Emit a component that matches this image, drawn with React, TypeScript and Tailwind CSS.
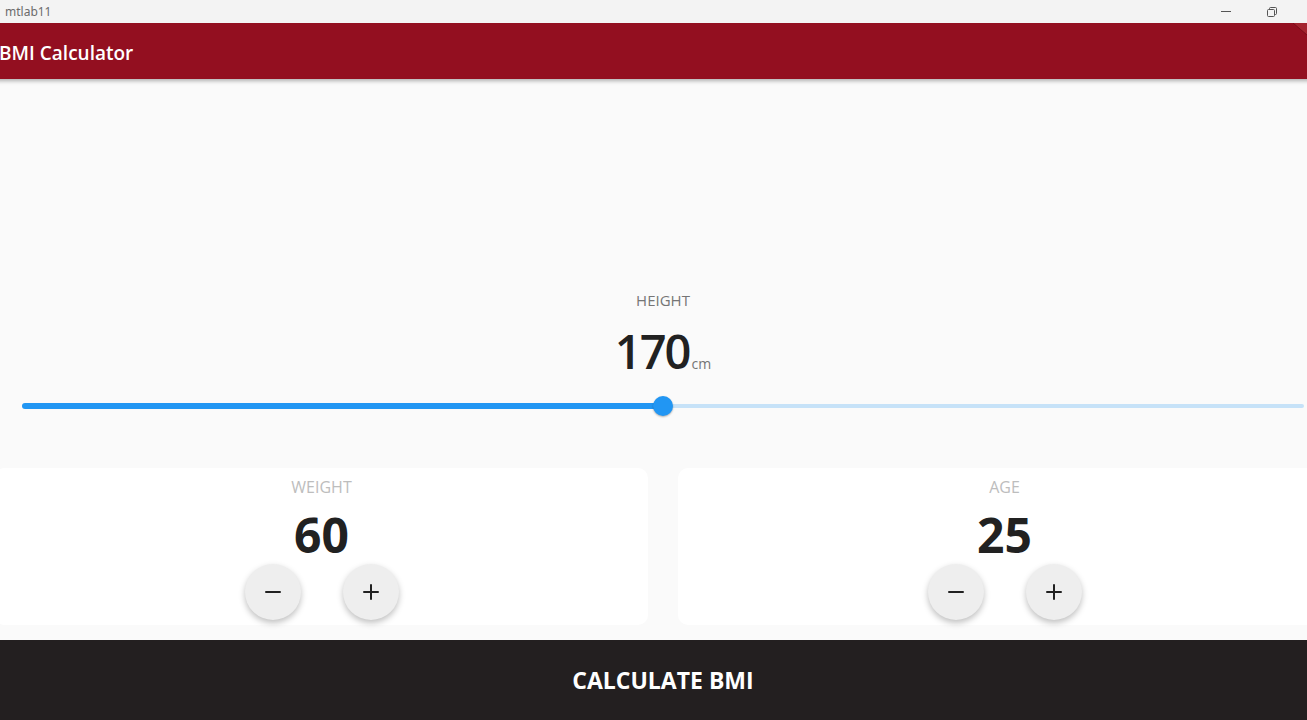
import { Minus, Plus } from "lucide-react"

type CounterProps = {
  label: string
  value: number
}

function CounterCard({ label, value }: CounterProps) {
  return (
    <div className="flex-1 m-[15px] rounded-[10px] bg-white flex flex-col items-center pt-[8px]">
      <p className="text-[16px] leading-[22px] text-[#bdbdbd]">{label}</p>
      <p className="mt-[11px] text-[48px] leading-[52px] font-bold text-[#212121]">{value}</p>
      <div className="mt-[3px] flex gap-[42px]">
        <button className="w-[56px] h-[56px] rounded-full bg-[#eeeeee] flex items-center justify-center shadow-[0_3px_6px_rgba(0,0,0,0.25)]">
          <Minus size={24} strokeWidth={2} className="text-[#212121]" />
        </button>
        <button className="w-[56px] h-[56px] rounded-full bg-[#eeeeee] flex items-center justify-center shadow-[0_3px_6px_rgba(0,0,0,0.25)]">
          <Plus size={24} strokeWidth={2} className="text-[#212121]" />
        </button>
      </div>
    </div>
  )
}

export default function App() {
  const height = 170
  const pct = ((height - 120) / (220 - 120)) * 100

  return (
    <div className="w-[1307px] h-[720px] overflow-hidden flex flex-col bg-[#fafafa] font-['Open_Sans',sans-serif]">
      {/* window title bar */}
      <div className="h-[23px] shrink-0 bg-[#f3f3f3] flex items-center justify-between">
        <span className="pl-[5px] text-[12px] text-[#6b6b6b] font-['Noto_Sans',sans-serif]">mtlab11</span>
        <div className="flex items-center h-full">
          <div className="w-[46px] h-full flex items-center justify-center">
            <div className="w-[10px] h-px bg-[#555]" />
          </div>
          <div className="w-[46px] h-full flex items-center justify-center">
            <svg width="10" height="10" viewBox="0 0 10 10" fill="none" stroke="#555" strokeWidth="1">
              <rect x="0.5" y="2.5" width="7" height="7" rx="1" />
              <path d="M2.5 2.5V1.5a1 1 0 0 1 1-1h5a1 1 0 0 1 1 1v5a1 1 0 0 1-1 1h-1" />
            </svg>
          </div>
          <div className="w-[12px]" />
        </div>
      </div>

      <div className="flex-1 overflow-hidden">
        <div className="w-[1366px] -ml-[20px] h-full flex flex-col">
          {/* app bar */}
          <div className="relative h-[56px] shrink-0 bg-[#930f20] flex items-center pl-[19px] pt-[4px] shadow-[0_2px_4px_rgba(0,0,0,0.3)] z-10">
            <h1 className="text-[19px] font-semibold text-white">BMI Calculator</h1>
            <svg className="absolute top-0 right-[39px]" width="16" height="14" viewBox="0 0 16 14">
              <path d="M2 0H16V12Z" fill="#a3242f" />
              <path d="M2 0L16 12" stroke="#7a0c1a" strokeWidth="1" />
            </svg>
          </div>

          {/* content */}
          <div className="flex-1 flex flex-col">
            <div className="flex-1 flex flex-col items-center justify-end pb-[23px]">
              <p className="text-[15px] leading-[20px] text-[#757575]">HEIGHT</p>
              <div className="mt-[14px] mb-[4px] flex items-baseline">
                <span className="text-[47px] leading-[54px] font-semibold text-[#212121] tracking-[-2px]">{height}</span>
                <span className="ml-[2px] text-[14px] text-[#757575]">cm</span>
              </div>
              <div className="w-full h-[48px] px-[42px] flex items-center">
                <div className="relative w-full h-[6px] flex items-center">
                  <div className="h-[6px] bg-[#2196f3] rounded-l-full" style={{ width: `${pct}%` }} />
                  <div className="flex-1 h-[4px] bg-[#c6e2f8] rounded-r-full" />
                  <div
                    className="absolute w-[20px] h-[20px] -ml-[10px] rounded-full bg-[#2196f3] shadow-[0_1px_2px_rgba(0,0,0,0.3)]"
                    style={{ left: `${pct}%` }}
                  />
                </div>
              </div>
            </div>

            <div className="h-[187px] shrink-0 flex">
              <CounterCard label="WEIGHT" value={60} />
              <CounterCard label="AGE" value={25} />
            </div>
          </div>

          {/* bottom button */}
          <button className="h-[80px] shrink-0 bg-[#231f20] flex items-center justify-center">
            <span className="text-[23px] font-bold text-white">CALCULATE BMI</span>
          </button>
        </div>
      </div>
    </div>
  )
}
